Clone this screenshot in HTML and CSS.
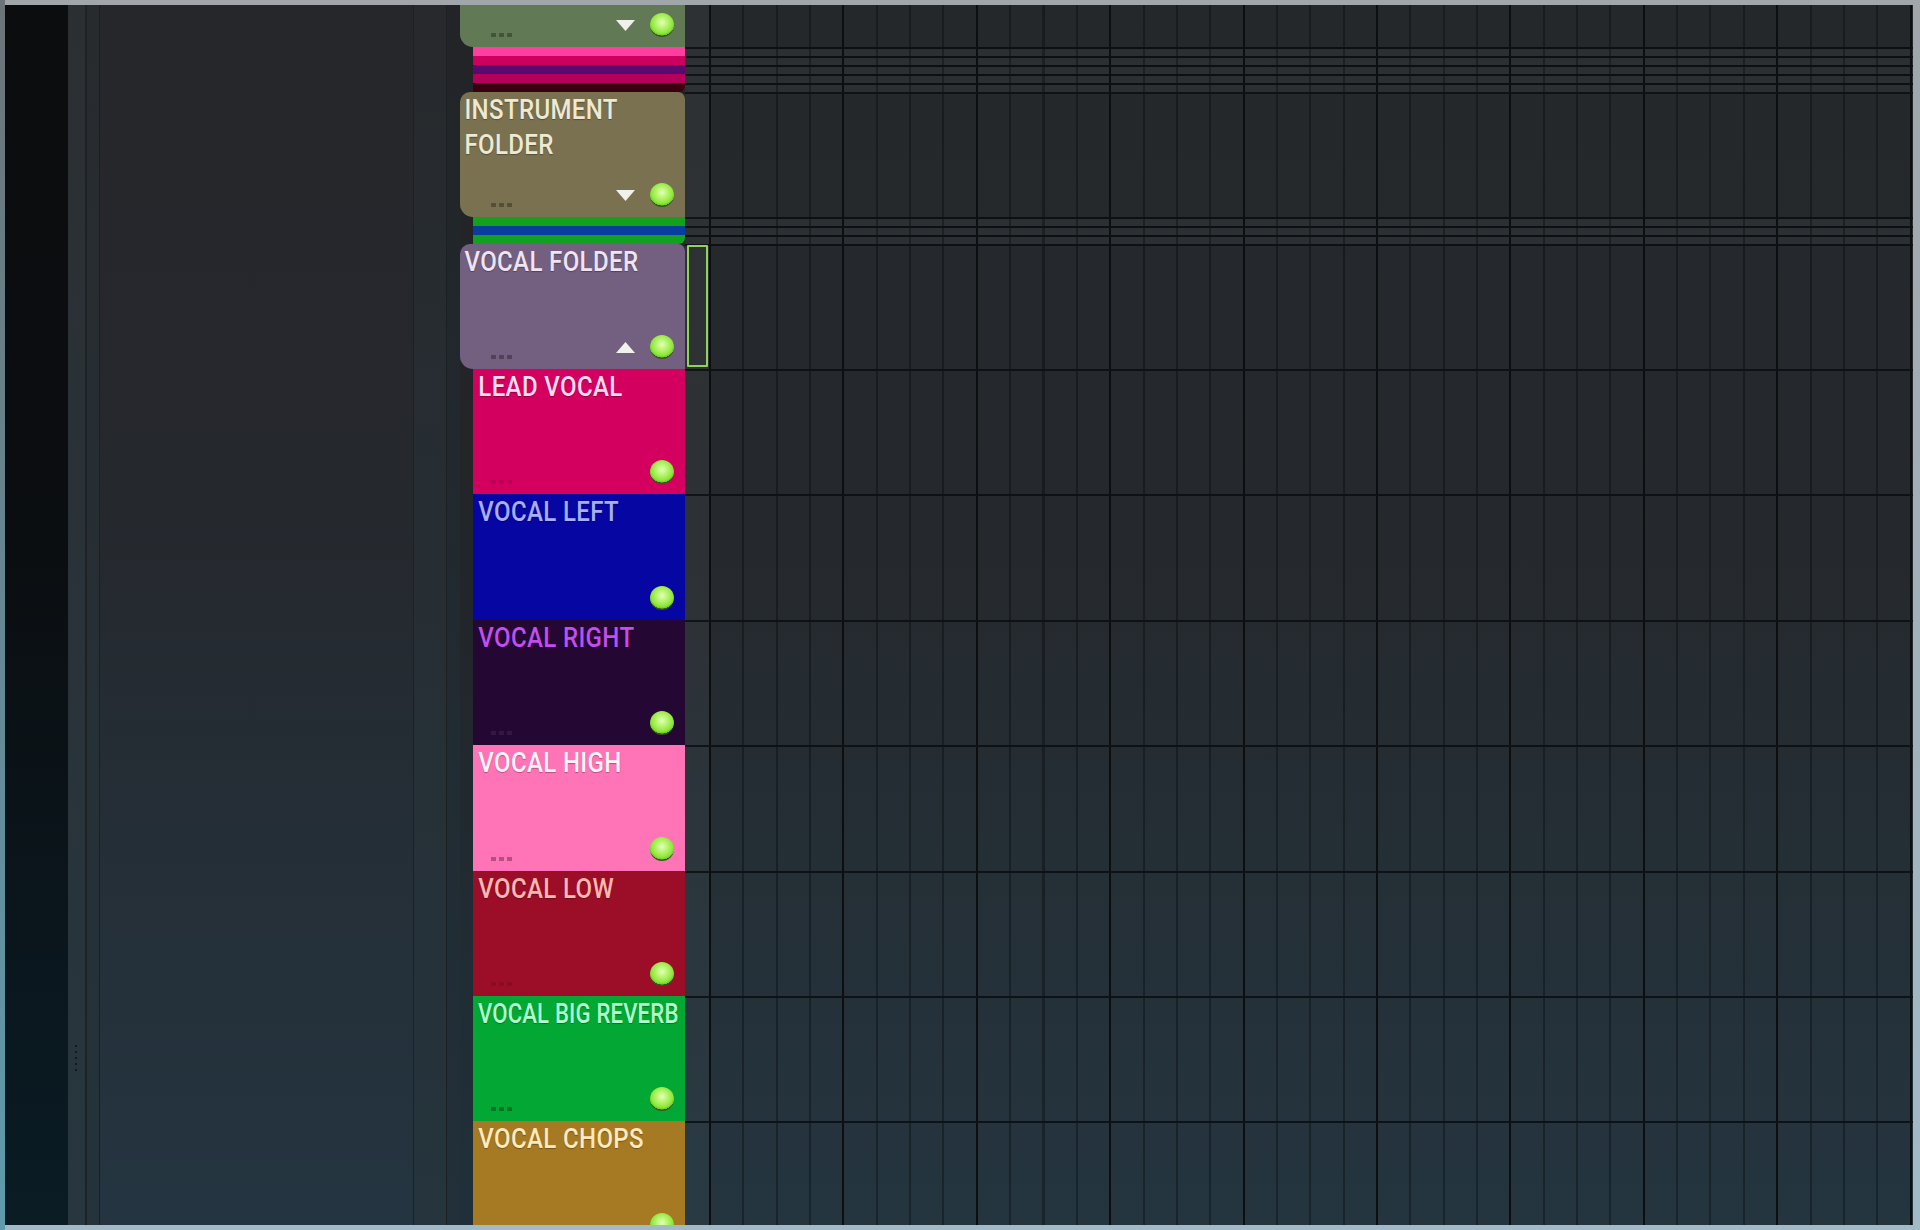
FILE: index.html
```html
<!DOCTYPE html>
<html lang="en">
<head>
<meta charset="utf-8">
<title>Playlist</title>
<link rel="stylesheet" href="styles.css">
</head>
<body>
<div class="frame">
  <div class="dock"></div>
  <div class="panel">
    <div class="pcol p1"><div class="grip"><span></span><span></span><span></span><span></span><span></span></div></div>
    <div class="pcol p2"></div>
    <div class="pcol p3"></div>
    <div class="pcol p4"></div>
    <div class="pcol p5"></div>
  </div>
  <div class="playlist">
    <!-- partial folder -->
    <div class="row row-partial">
      <div class="tcell">
        <div class="track folder folder-cut" style="--c:#627955">
          <div class="foot">
            <div class="dots"><i></i><i></i><i></i></div>
            <svg class="arrow" width="19" height="11" viewBox="0 0 19 11"><polygon points="0,0 19,0 9.5,11" /></svg>
            <div class="led"></div>
          </div>
        </div>
      </div>
      <div class="ncell"></div>
      <div class="gcell"></div>
    </div>
    <div class="row lane-row"><div class="tcell"><div class="lane" style="--c:#ff3ea2"></div></div><div class="ncell"></div><div class="gcell"></div></div>
    <div class="row lane-row"><div class="tcell"><div class="lane" style="--c:#cc005f"></div></div><div class="ncell"></div><div class="gcell"></div></div>
    <div class="row lane-row"><div class="tcell"><div class="lane" style="--c:#5a0a6e"></div></div><div class="ncell"></div><div class="gcell"></div></div>
    <div class="row lane-row"><div class="tcell"><div class="lane" style="--c:#b4005a"></div></div><div class="ncell"></div><div class="gcell"></div></div>
    <div class="row lane-row"><div class="tcell"><div class="lane lane-last" style="--c:#3a0010"></div></div><div class="ncell"></div><div class="gcell"></div></div>

    <div class="row">
      <div class="tcell">
        <div class="track folder" style="--c:#7a7150">
          <div class="name" style="--t:#efe9d3">INSTRUMENT FOLDER</div>
          <div class="foot">
            <div class="dots"><i></i><i></i><i></i></div>
            <svg class="arrow" width="19" height="11" viewBox="0 0 19 11"><polygon points="0,0 19,0 9.5,11" /></svg>
            <div class="led"></div>
          </div>
        </div>
      </div>
      <div class="ncell"></div>
      <div class="gcell"></div>
    </div>
    <div class="row lane-row"><div class="tcell"><div class="lane" style="--c:#13a01d"></div></div><div class="ncell"></div><div class="gcell"></div></div>
    <div class="row lane-row"><div class="tcell"><div class="lane" style="--c:#083d9e"></div></div><div class="ncell"></div><div class="gcell"></div></div>
    <div class="row lane-row"><div class="tcell"><div class="lane lane-last" style="--c:#11a01f"></div></div><div class="ncell"></div><div class="gcell"></div></div>

    <div class="row">
      <div class="tcell">
        <div class="track folder" style="--c:#735f80">
          <div class="name" style="--t:#f0e4f3">VOCAL FOLDER</div>
          <div class="foot">
            <div class="dots"><i></i><i></i><i></i></div>
            <svg class="arrow" width="19" height="11" viewBox="0 0 19 11"><polygon points="0,11 19,11 9.5,0" /></svg>
            <div class="led"></div>
          </div>
        </div>
      </div>
      <div class="ncell"><div class="sel"></div></div>
      <div class="gcell"></div>
    </div>

    <div class="row child-row">
      <div class="tcell"><div class="track child" style="--c:#d30060"><div class="name" style="--t:#ffdcef">LEAD VOCAL</div><div class="foot"><div class="dots faint"><i></i><i></i><i></i></div><div class="led"></div></div></div></div>
      <div class="ncell"></div><div class="gcell"></div>
    </div>
    <div class="row child-row">
      <div class="tcell"><div class="track child" style="--c:#0606a2"><div class="name" style="--t:#a9aefc">VOCAL LEFT</div><div class="foot"><div class="dots none"><i></i><i></i><i></i></div><div class="led"></div></div></div></div>
      <div class="ncell"></div><div class="gcell"></div>
    </div>
    <div class="row child-row">
      <div class="tcell"><div class="track child" style="--c:#240733"><div class="name" style="--t:#c24ef0">VOCAL RIGHT</div><div class="foot"><div class="dots light"><i></i><i></i><i></i></div><div class="led"></div></div></div></div>
      <div class="ncell"></div><div class="gcell"></div>
    </div>
    <div class="row child-row">
      <div class="tcell"><div class="track child" style="--c:#ff74b6"><div class="name" style="--t:#fff3f9">VOCAL HIGH</div><div class="foot"><div class="dots"><i></i><i></i><i></i></div><div class="led"></div></div></div></div>
      <div class="ncell"></div><div class="gcell"></div>
    </div>
    <div class="row child-row">
      <div class="tcell"><div class="track child" style="--c:#9c0d27"><div class="name" style="--t:#ffb7b3">VOCAL LOW</div><div class="foot"><div class="dots faint"><i></i><i></i><i></i></div><div class="led"></div></div></div></div>
      <div class="ncell"></div><div class="gcell"></div>
    </div>
    <div class="row child-row">
      <div class="tcell"><div class="track child" style="--c:#02a833"><div class="name tight" style="--t:#b2ffcd">VOCAL BIG REVERB</div><div class="foot"><div class="dots"><i></i><i></i><i></i></div><div class="led"></div></div></div></div>
      <div class="ncell"></div><div class="gcell"></div>
    </div>
    <div class="row child-row">
      <div class="tcell"><div class="track child" style="--c:#a57a22"><div class="name" style="--t:#ffe9bf">VOCAL CHOPS</div><div class="foot"><div class="dots faint"><i></i><i></i><i></i></div><div class="led"></div></div></div></div>
      <div class="ncell"></div><div class="gcell"></div>
    </div>
  </div>
</div>
</body>
</html>
```
FILE: styles.css
```css
* { box-sizing: border-box; }
html, body { margin: 0; padding: 0; }
body {
  width: 1920px;
  height: 1230px;
  overflow: hidden;
  background: #202326;
  font-family: Roboto, "Liberation Sans", sans-serif;
}

.frame {
  width: 1920px;
  height: 1230px;
  display: flex;
  padding: 5px 7px 5px 5px;
  background:
    linear-gradient(to bottom, #6c7479, #5e9bab) left top / 5px 100% no-repeat,
    linear-gradient(to bottom, #a0a6aa, #a0bbc7);
  overflow: hidden;
}

/* dark dock strip */
.dock {
  width: 63px;
  flex: none;
  background: linear-gradient(to bottom, #0b0d0f 0%, #0b0e11 45%, #0a1c25 100%);
}

/* left panel with columns */
.panel {
  display: flex;
  flex: none;
  width: 392px;
}
.pcol { height: 100%; }
.p1 {
  width: 19px;
  border-right: 2px solid #1f2225;
  background: linear-gradient(to bottom, #2c2f32, #27363f);
}
.p2 {
  width: 13px;
  border-right: 1px solid #1c1f22;
  background: linear-gradient(to bottom, #282b2e, #24333c);
}
.p3 {
  width: 314px;
  border-right: 1px solid #1e2124;
  background: linear-gradient(to bottom, #25272b 0%, #25282d 40%, #243541 100%);
}
.p4 {
  width: 33px;
  border-right: 1px solid #1d2023;
  background: linear-gradient(to bottom, #27292c, #25343d);
}
.p5 {
  width: 13px;
  background: linear-gradient(to bottom, #222427, #21303a);
}
.grip {
  margin: 1040px 0 0 7px;
  display: flex;
  flex-direction: column;
  gap: 4px;
}
.grip span {
  width: 2px;
  height: 2px;
  background: #15191c;
}

/* playlist */
.playlist {
  flex: 1;
  height: 100%;
  overflow: hidden;
  background: linear-gradient(to bottom, #25282b 0%, #25292d 45%, #243540 100%);
}
.row {
  display: grid;
  grid-template-columns: 225px 24px 1fr;
  height: 125.4px;
}
.row-partial { height: 42px; }
.lane-row { height: 9px; }
.row:nth-child(12) { height: 125px; }
.row:nth-child(7) { height: 125px; }

.tcell {
  background: linear-gradient(to bottom, #222427 0%, #222529 45%, #20303a 100%) fixed;
  display: flex;
  flex-direction: column;
}
.ncell {
  background:
    linear-gradient(#111416, #111416) top / 100% 2px no-repeat,
    linear-gradient(to bottom, #2e3134 0%, #2d3135 45%, #293a44 100%) fixed;
  display: flex;
}
.gcell {
  background:
    linear-gradient(#0f1214, #0f1214) top / 100% 2px no-repeat,
    repeating-linear-gradient(90deg, #0c0e10 0 2px, transparent 2px 133.4px),
    repeating-linear-gradient(90deg, rgba(0,0,0,0.32) 0 2px, transparent 2px 33.35px);
}
.row-partial .ncell {
  background:
    linear-gradient(to bottom, #2e3134 0%, #2d3135 45%, #293a44 100%) fixed;
}
.row-partial .gcell {
  background:
    repeating-linear-gradient(90deg, #0c0e10 0 2px, transparent 2px 133.4px),
    repeating-linear-gradient(90deg, rgba(0,0,0,0.32) 0 2px, transparent 2px 33.35px);
}
.lane-row .gcell {
  background:
    linear-gradient(#0d1012, #0d1012) top / 100% 2px no-repeat,
    repeating-linear-gradient(90deg, #0c0e10 0 2px, transparent 2px 133.4px),
    repeating-linear-gradient(90deg, rgba(0,0,0,0.32) 0 2px, transparent 2px 33.35px),
    rgba(255,255,255,0.035);
}

/* lanes (collapsed children) */
.lane {
  flex: 1;
  margin-left: 13px;
  background: var(--c);
}
.lane-last { border-bottom-right-radius: 6px; }

/* tracks */
.track {
  flex: 1;
  display: flex;
  flex-direction: column;
  background: var(--c);
  min-height: 0;
}
.track.folder {
  border-radius: 10px 7px 0 13px;
}
.track.folder-cut {
  border-radius: 0 0 0 13px;
}
.track.child {
  margin-left: 13px;
}
.name {
  font-family: Roboto, "Liberation Sans", sans-serif;
  font-weight: 500;
  font-size: 27px;
  line-height: 35px;
  padding: 1px 0 0 5px;
  color: var(--t);
  transform: scaleX(0.89);
  transform-origin: left top;
  width: 240px;
  text-shadow: 0 1px 1px rgba(0,0,0,0.3);
  white-space: normal;
  letter-spacing: 0.4px;
}
.name.tight {
  transform: scaleX(0.82);
  letter-spacing: 0.2px;
}
.folder .name { width: 235px; }
.child .name { padding-left: 6px; white-space: nowrap; }

.foot {
  margin-top: auto;
  display: flex;
  align-items: center;
  height: 34px;
  padding: 0 11px 10px 0;
  flex: none;
}
.dots {
  display: flex;
  gap: 3px;
  align-self: flex-end;
  margin-left: 31px;
  margin-right: auto;
}
.child .dots { margin-left: 18px; }
.dots i {
  display: block;
  width: 5px;
  height: 4px;
  background: rgba(0,0,0,0.3);
}
.dots.faint i { background: rgba(0,0,0,0.12); }
.dots.none i { background: transparent; }
.dots.light i { background: rgba(255,255,255,0.07); }

.arrow {
  flex: none;
  margin-right: 15px;
}
.arrow polygon { fill: #f1f1eb; }

.led {
  flex: none;
  width: 24px;
  height: 24px;
  border-radius: 50%;
  background:
    radial-gradient(circle at 50% 40%, #e4ffbb 0%, #b6f56e 30%, #8ce638 58%, #66c822 68%, #34521c 70%, #3a5424 77%, rgba(175,195,155,0.8) 81%, rgba(150,170,130,0.35) 100%);
}

/* selection box */
.sel {
  flex: 1;
  margin: 1px 1px 2px 2px;
  border: 2px solid #8fd35f;
  border-radius: 1px;
}
```
